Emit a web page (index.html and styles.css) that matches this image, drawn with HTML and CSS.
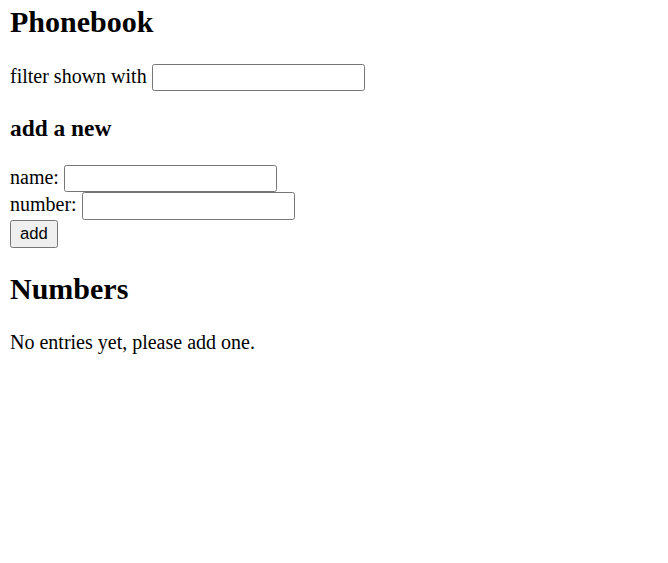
FILE: index.html
```html
<!DOCTYPE html>
<html>
<head>
<meta charset="utf-8">
<title>Phonebook</title>
<link rel="stylesheet" href="styles.css">
</head>
<body>
<div class="app">
  <h1 class="title">Phonebook</h1>
  <div class="row">filter shown with <input class="field" type="text"></div>
  <h3 class="subtitle">add a new</h3>
  <form class="form">
    <div class="row">name: <input class="field field-form" type="text"></div>
    <div class="row">number: <input class="field field-form" type="text"></div>
    <div class="row"><button class="btn" type="submit">add</button></div>
  </form>
  <h2 class="title">Numbers</h2>
  <p class="empty">No entries yet, please add one.</p>
</div>
</body>
</html>
```

FILE: styles.css
```css
html, body {
  margin: 0;
  background: #fff;
}
body {
  padding: 5px 10px 0;
  font-family: "Liberation Serif", "Times New Roman", serif;
  font-size: 20px;
  color: #000;
}
.title {
  font-size: 30px;
  font-weight: bold;
  margin: 0 0 24.9px;
}
h2.title {
  margin-top: 23.9px;
}
.subtitle {
  font-size: 23.4px;
  font-weight: bold;
  margin: 24px 0 22.8px;
}
.form {
  margin: 0;
}
.row {
  margin: 0;
}
.field {
  box-sizing: border-box;
  width: 213px;
  height: 27px;
  margin: 0;
  padding: 1px 2px;
  border: 1px solid #767676;
  border-radius: 2.5px;
  font-family: "Liberation Sans", Arial, sans-serif;
  font-size: 16.67px;
  background: #fff;
  vertical-align: baseline;
}
.field-form {
  height: 27.6px;
}
.btn {
  box-sizing: border-box;
  height: 28px;
  margin: 0;
  padding: 0 9px;
  border: 1px solid #767676;
  border-radius: 2.5px;
  background: #efefef;
  font-family: "Liberation Sans", Arial, sans-serif;
  font-size: 16.67px;
  color: #000;
}
.empty {
  margin: 24.9px 0;
}
```
